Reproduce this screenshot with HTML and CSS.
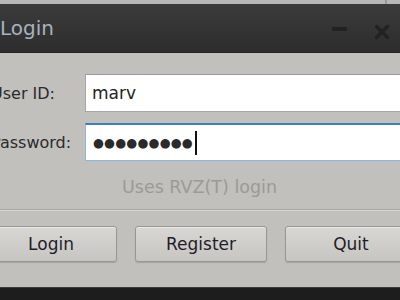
FILE: index.html
```html
<!DOCTYPE html>
<html lang="en">
<head>
  <meta charset="UTF-8">
  <title>Login</title>
  <link rel="stylesheet" href="styles.css">
</head>
<body>
  <div class="screen">
    <div class="strip"><span class="strip-edge"></span></div>

    <div class="window">
      <!-- title bar -->
      <div class="titlebar">
        <span class="title">Login</span>
        <span class="controls">
          <span class="ctl-min"></span>
          <svg class="ctl-close" width="16" height="16" viewBox="0 0 16 16">
            <path d="M2.5 2.5 L13.5 13.5 M13.5 2.5 L2.5 13.5" stroke="#222" stroke-width="3.4" stroke-linecap="round"/>
          </svg>
        </span>
      </div>

      <div class="content">
        <div class="form">
          <label class="field-label">User ID:</label>
          <div class="field">marv</div>
          <label class="field-label">Password:</label>
          <div class="field focused"><span class="dots">●●●●●●●●●</span><span class="caret"></span></div>
        </div>

        <p class="hint">Uses RVZ(T) login</p>

        <div class="sep"></div>

        <div class="buttons">
          <button class="btn">Login</button>
          <button class="btn">Register</button>
          <button class="btn">Quit</button>
        </div>
      </div>
    </div>

    <div class="taskbar"></div>
  </div>
</body>
</html>
```

FILE: styles.css
```css
body { margin: 0; background: #c2c0bd; font-family: "DejaVu Sans", sans-serif; }
.screen { width: 400px; height: 300px; overflow: hidden; display: flex; flex-direction: column; background: #c2c0bd; }

.strip { height: 4px; background: #b9b8b6; display: flex; justify-content: flex-end; padding-right: 13px; }
.strip-edge { width: 2px; background: #8f9aa5; }

.window { margin-left: -15px; width: 415px; flex: 1; display: flex; flex-direction: column; }

.titlebar {
  height: 48px;
  background: linear-gradient(#3b3b3b, #2d2d2d);
  border-bottom: 1px solid #232323;
  display: flex;
  align-items: center;
  padding: 0 10px 0 15px;
}
.title { color: #a7b3bf; font-size: 20px; margin-top: -1px; }
.controls { margin-left: auto; display: flex; align-items: center; gap: 27px; margin-top: 8px; }
.ctl-min { width: 15px; height: 4px; background: #222; border-radius: 1px; margin-top: -6px; }
.ctl-close { display: block; }

.content { padding: 21px 0 0 0; flex: 1; display: flex; flex-direction: column; }

.form { display: grid; grid-template-columns: 94px 1fr; row-gap: 11px; align-items: center; padding-left: 6px; margin-right: -30px; }
.field-label { color: #2b2b2b; font-size: 16px; }
.field {
  height: 36px;
  background: #fff;
  border: 1px solid #a6a6a6;
  border-top-color: #9a9a9a;
  display: flex;
  align-items: center;
  padding-left: 6px;
  font-size: 17px;
  color: #222;
}
.field.focused { border: 1px solid #8db7dd; border-top: 2px solid #3f7fb6; height: 35px; }
.dots { font-size: 12.5px; letter-spacing: 0.2px; color: #2a2a2a; padding-left: 1px; }
.caret { width: 2px; height: 24px; background: #111; margin-left: 2px; }

.hint { margin: 16px 0 0 137px; color: #9b9a98; font-size: 17.5px; }

.sep { margin-top: 12px; height: 1px; background: #a8a6a3; border-bottom: 1px solid #d9d7d4; }

.buttons { display: flex; gap: 18px; margin-top: 15px; margin-right: -40px; }
.btn {
  flex: none;
  width: 132px;
  height: 36px;
  font-family: "DejaVu Sans", sans-serif;
  font-size: 17px;
  color: #1e1e2a;
  background: linear-gradient(#d9d7d4, #c7c5c2);
  border: 1px solid #999794;
  border-radius: 3px;
  box-shadow: inset 0 1px 0 #ecebea, 0 1px 1px rgba(0,0,0,0.15);
}

.taskbar { height: 12px; background: #1d1d1d; border-top: 1px solid #3a3a3a; }
```
